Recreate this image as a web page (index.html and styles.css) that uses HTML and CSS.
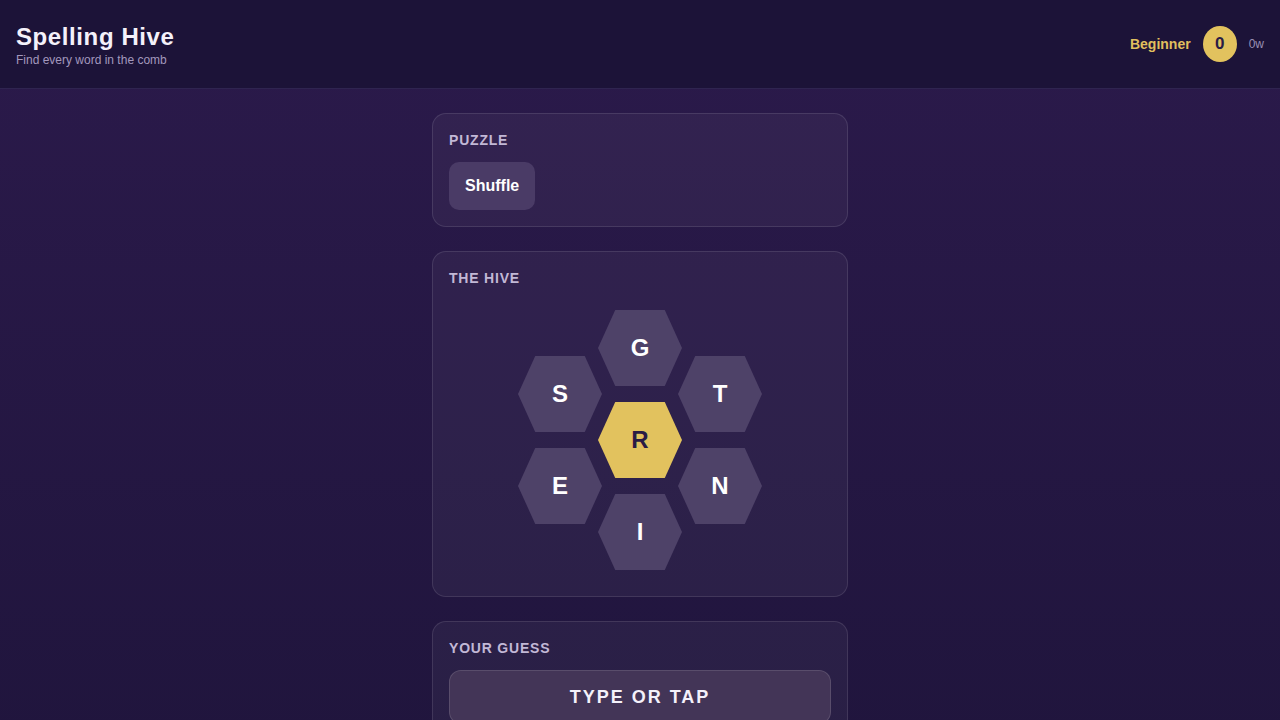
FILE: index.html
```html
<!DOCTYPE html>
<html lang="en">
<head>
<meta charset="utf-8">
<title>Spelling Hive</title>
<link rel="stylesheet" href="styles.css">
</head>
<body>
<header class="topbar">
  <div class="brand">
    <h1 class="title">Spelling Hive</h1>
    <p class="subtitle">Find every word in the comb</p>
  </div>
  <div class="status">
    <span class="rank">Beginner</span>
    <span class="score">0</span>
    <span class="words">0w</span>
  </div>
</header>
<main class="main">
  <section class="card">
    <h2 class="card-label">Puzzle</h2>
    <button class="btn">Shuffle</button>
  </section>
  <section class="card">
    <h2 class="card-label">The Hive</h2>
    <div class="hive">
      <div class="hex hex-g">G</div>
      <div class="hex hex-s">S</div>
      <div class="hex hex-t">T</div>
      <div class="hex hex-center hex-r">R</div>
      <div class="hex hex-e">E</div>
      <div class="hex hex-n">N</div>
      <div class="hex hex-i">I</div>
    </div>
  </section>
  <section class="card">
    <h2 class="card-label">Your Guess</h2>
    <div class="guess">TYPE OR TAP</div>
  </section>
</main>
</body>
</html>
```
FILE: styles.css
```css
* { box-sizing: border-box; }
html, body { margin: 0; padding: 0; }
body {
  font-family: "Liberation Sans", Arial, sans-serif;
  color: #ffffff;
  background: linear-gradient(180deg, #2b1a4b 0%, #20153d 100%);
  min-height: 720px;
  overflow: hidden;
}
.topbar {
  height: 89px;
  background: #1c1338;
  border-bottom: 1px solid #2f2450;
  display: flex;
  align-items: center;
  justify-content: space-between;
  padding: 0 16px;
}
.brand { display: flex; flex-direction: column; }
.title {
  margin: 0;
  font-size: 24px;
  font-weight: 700;
  letter-spacing: 0.6px;
  line-height: 31px;
  color: #f4f1fa;
}
.subtitle {
  margin: 1px 0 0;
  font-size: 12px;
  line-height: 14px;
  color: #a398bd;
}
.status { display: flex; align-items: center; gap: 12px; }
.rank { font-size: 14px; font-weight: 700; color: #e0bf5e; }
.score {
  width: 34px; height: 36px;
  border-radius: 50%;
  background: #e2c25e;
  color: #2a1c45;
  font-weight: 700;
  font-size: 17px;
  display: flex; align-items: center; justify-content: center;
}
.words { font-size: 12px; color: #9a90b3; }
.main {
  display: flex;
  flex-direction: column;
  align-items: center;
  gap: 24px;
  padding-top: 24px;
}
.card {
  width: 416px;
  background: rgba(255, 255, 255, 0.045);
  border: 1px solid rgba(255, 255, 255, 0.11);
  border-radius: 14px;
  padding: 16px;
}
.card-label {
  margin: 0 0 12px;
  font-size: 14px;
  line-height: 20px;
  font-weight: 700;
  letter-spacing: 0.8px;
  text-transform: uppercase;
  color: #c2b8d6;
}
.btn {
  font-family: inherit;
  font-size: 16px;
  font-weight: 700;
  color: #ffffff;
  background: #4a3b66;
  border: none;
  border-radius: 10px;
  height: 48px;
  padding: 0 16px;
}
.hive {
  position: relative;
  height: 280px;
}
.hex {
  position: absolute;
  width: 84px;
  height: 76px;
  background: #4e4268;
  clip-path: polygon(20.5% 0, 79.5% 0, 100% 50%, 79.5% 100%, 20.5% 100%, 0 50%);
  display: flex;
  align-items: center;
  justify-content: center;
  font-size: 24px;
  font-weight: 700;
  color: #ffffff;
}
.hex-center { background: #e2c25e; color: #2a1c45; }
.hex-g { left: 149px; top: 10px; }
.hex-s { left: 69px; top: 56px; }
.hex-t { left: 229px; top: 56px; }
.hex-r { left: 149px; top: 102px; }
.hex-e { left: 69px; top: 148px; }
.hex-n { left: 229px; top: 148px; }
.hex-i { left: 149px; top: 194px; }
.guess {
  height: 54px;
  border-radius: 12px;
  background: #433557;
  border: 1px solid rgba(255, 255, 255, 0.12);
  display: flex;
  align-items: center;
  justify-content: center;
  font-size: 18px;
  font-weight: 700;
  letter-spacing: 2px;
  color: #f4f1fa;
}
```
